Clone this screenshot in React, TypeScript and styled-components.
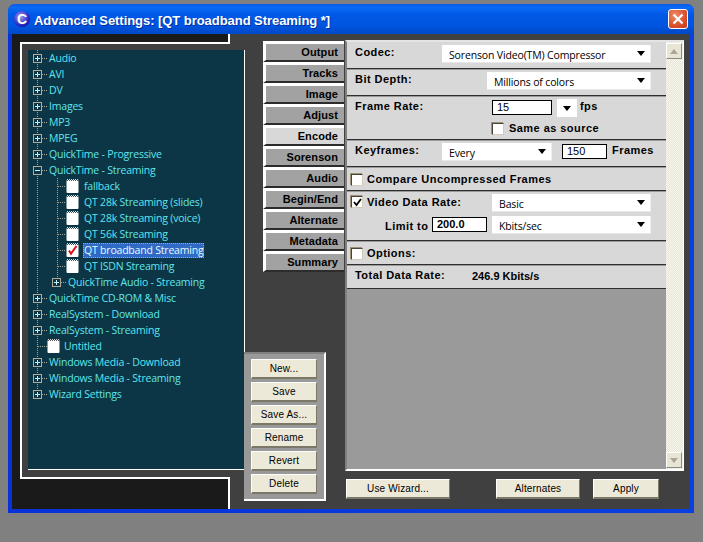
import React from "react";
import styled, { createGlobalStyle } from "styled-components";

const Global = createGlobalStyle`
  html, body { margin: 0; padding: 0; background: #808080; }
  * { box-sizing: border-box; }
  body { font-family: "Liberation Sans", Arial, sans-serif; width: 703px; height: 542px; overflow: hidden; }
`;

const Win = styled.div`
  margin: 4px 0 0 8px;
  width: 686px;
  height: 509px;
  border-radius: 7px 7px 0 0;
  background: linear-gradient(90deg, #0831d9, #0a3fe0);
  overflow: hidden;
  display: flex;
  flex-direction: column;
`;
const TitleBar = styled.div`
  height: 30px;
  flex: none;
  display: flex;
  align-items: center;
  padding: 0 6px;
  gap: 4px;
  background: linear-gradient(180deg, #0a5be8 0%, #0a6bf5 12%, #0058e6 35%, #0055e0 70%, #0048c8 100%);
`;
const AppIcon = styled.div`
  width: 16px;
  height: 16px;
  border-radius: 50%;
  flex: none;
  display: flex;
  align-items: center;
  justify-content: center;
  background: radial-gradient(circle at 40% 35%, #9a9cf0, #2020c0 65%, #08086a);
  color: #fff;
  font: bold 14px/16px "Liberation Sans", sans-serif;
`;
const Title = styled.div`
  flex: 1;
  margin-top: 3px;
  color: #fff;
  font: bold 13px "Liberation Sans", sans-serif;
  letter-spacing: -0.05px;
  text-shadow: 1px 1px 0 #0030a0;
  white-space: nowrap;
`;
const Close = styled.div`
  width: 20px;
  height: 20px;
  border: 1px solid #fff;
  border-radius: 3px;
  background: radial-gradient(circle at 35% 30%, #ee8a6a, #d9502c 60%, #c23a1c);
  display: flex;
  align-items: center;
  justify-content: center;
`;
const Body = styled.div`
  flex: 1;
  margin: 0 4px 4px;
  background: #404040;
  display: flex;
  min-height: 0;
`;
const LeftPane = styled.div`
  position: relative;
  width: 218px;
  flex: none;
  background: #1a1a1a;
  border-right: 2px solid #fff;
  padding: 8px 0 30px 8px;
`;
const Frame = styled.div`
  position: relative;
  width: 225px;
  height: 437px;
  background: #404040;
  border-left: 2px solid #fff;
  padding: 8px 0 8px 6px;
  &::before {
    content: "";
    position: absolute;
    left: 0;
    top: 0;
    width: 208px;
    height: 2px;
    background: #fff;
  }
  &::after {
    content: "";
    position: absolute;
    left: -2px;
    bottom: 0;
    width: 210px;
    height: 2px;
    background: #fff;
  }
`;
const Tree = styled.div`
  width: 217px;
  height: 420px;
  background: #0c3545;
  border-right: 1px solid #fff;
  border-bottom: 1px solid #fff;
`;

const dots = "repeating-linear-gradient(180deg, #a8a48e 0 1px, transparent 1px 2px)";
const TreeRow = styled.div<{ $root?: "full" | "half"; $sub?: "full" | "half" }>`
  height: 16px;
  display: flex;
  align-items: center;
  background-image: ${(p) => [p.$root ? dots : "", p.$sub ? dots : ""].filter(Boolean).join(",") || "none"};
  background-repeat: no-repeat;
  background-position: ${(p) => [p.$root ? "9px 0" : "", p.$sub ? "29px 0" : ""].filter(Boolean).join(",") || "0 0"};
  background-size: ${(p) =>
    [p.$root ? `1px ${p.$root === "half" ? "50%" : "100%"}` : "", p.$sub ? `1px ${p.$sub === "half" ? "50%" : "100%"}` : ""]
      .filter(Boolean)
      .join(",") || "auto"};
`;
const Box = styled.div<{ $at: number }>`
  width: 9px;
  height: 9px;
  flex: none;
  margin-left: ${(p) => p.$at}px;
  border: 1px solid #b4ac98;
  background: #0c3545;
  position: relative;
  &::before {
    content: "";
    position: absolute;
    left: 1px;
    top: 3px;
    width: 5px;
    height: 1px;
    background: #bff4f6;
  }
`;
const Plus = styled.div`
  position: absolute;
  left: 3px;
  top: 1px;
  width: 1px;
  height: 5px;
  background: #bff4f6;
`;
const Dash = styled.div<{ $at?: number; $w: number }>`
  flex: none;
  height: 1px;
  margin-left: ${(p) => p.$at ?? 0}px;
  width: ${(p) => p.$w}px;
  background: repeating-linear-gradient(90deg, #a8a48e 0 1px, transparent 1px 2px);
`;
const TreeText = styled.div<{ $sel?: boolean; $gap: number }>`
  margin-left: ${(p) => p.$gap}px;
  padding: 0 ${(p) => (p.$sel ? 1 : 0)}px;
  height: ${(p) => (p.$sel ? "15px" : "auto")};
  font: 10.5px "Open Sans", sans-serif;
  letter-spacing: -0.2px;
  white-space: nowrap;
  color: ${(p) => (p.$sel ? "#e4fbff" : "#5fe6ee")};
  background: ${(p) => (p.$sel ? "#316ac5" : "transparent")};
  outline: ${(p) => (p.$sel ? "1px dotted #e0a040" : "none")};
  outline-offset: -1px;
  display: flex;
  align-items: center;
`;

const Doc = ({ checked }: { checked?: boolean }) => (
  <svg width="13" height="14" viewBox="0 0 13 14" style={{ flex: "none" }}>
    <rect x="0.5" y="1" width="12" height="13" rx="1" fill="#fff" />
    <path d="M1 0.5h1M3 0.5h1M5 0.5h1M7 0.5h1M9 0.5h1M11 0.5h1" stroke="#d8d8d8" strokeWidth="1" />
    <path d="M1 1.5h11" stroke="#555" strokeWidth="1" strokeDasharray="1 1" />
    {checked && <path d="M3 7.5l2 3.2L10.5 3" stroke="#d8121c" strokeWidth="2" fill="none" />}
  </svg>
);

const Tools = styled.div`
  position: absolute;
  left: 232px;
  top: 318px;
  width: 82px;
  height: 149px;
  background: #999;
  border-top: 2px solid #808080;
  border-right: 2px solid #fff;
  border-bottom: 2px solid #fff;
  padding: 5px 0 0 7px;
  display: flex;
  flex-direction: column;
  gap: 3px;
  z-index: 2;
`;
const Btn = styled.div<{ $w: number }>`
  width: ${(p) => p.$w}px;
  height: 20px;
  flex: none;
  background: #ece9d8;
  border-top: 1px solid #fff;
  border-left: 1px solid #fff;
  border-right: 1px solid #7c7868;
  border-bottom: 2px solid #7c7868;
  display: flex;
  align-items: center;
  justify-content: center;
  color: #000;
  font: 10px "Liberation Sans", sans-serif;
  letter-spacing: 0.15px;
  white-space: nowrap;
`;

const Tabs = styled.div`
  width: 81px;
  margin: 7px 0 0 33px;
  flex: none;
`;
const Tab = styled.div<{ $on?: boolean }>`
  height: 21px;
  background: ${(p) => (p.$on ? "#d8d8d8" : "#a2a2a2")};
  border-top: 3px solid #fff;
  border-left: 3px solid #fff;
  border-bottom: 2px solid #2c2c2c;
  padding-right: 6px;
  text-align: right;
  color: #000;
  font: bold 11px/17px "Liberation Sans", sans-serif;
  letter-spacing: 0.1px;
`;

const Right = styled.div`
  flex: none;
  margin: 6px 0 0 1px;
  width: 339px;
  display: flex;
  flex-direction: column;
`;
const Panel = styled.div`
  height: 431px;
  display: flex;
  background: #9a9a9a;
  border-top: 2px solid #e4e4e4;
  border-left: 2px solid #808080;
  border-right: 1px solid #fff;
  border-bottom: 2px solid #fff;
`;
const Rows = styled.div`
  width: 319px;
  flex: none;
  display: flex;
  flex-direction: column;
  gap: 1px;
`;
const Row = styled.div<{ $h: number; $pt: number; $pl: number }>`
  height: ${(p) => p.$h}px;
  flex: none;
  background: #d8d8d8;
  border-bottom: 1px solid #2e2e2e;
  padding: ${(p) => p.$pt}px 0 0 ${(p) => p.$pl}px;
`;
const Line = styled.div<{ $mt?: number; $center?: boolean }>`
  display: flex;
  align-items: ${(p) => (p.$center ? "center" : "flex-start")};
  margin-top: ${(p) => p.$mt ?? 0}px;
`;
const Label = styled.div<{ $w?: number; $ml?: number; $mt?: number; $mb?: number }>`
  width: ${(p) => (p.$w ? `${p.$w}px` : "auto")};
  margin-left: ${(p) => p.$ml ?? 0}px;
  margin-top: ${(p) => p.$mt ?? 0}px;
  margin-bottom: ${(p) => p.$mb ?? 0}px;
  flex: none;
  color: #000;
  font: bold 11px/14px "Liberation Sans", sans-serif;
  letter-spacing: 0.45px;
  white-space: nowrap;
`;
const Select = styled.div<{ $w: number; $ml?: number }>`
  width: ${(p) => p.$w}px;
  margin-left: ${(p) => p.$ml ?? 0}px;
  height: 18px;
  flex: none;
  background: #fff;
  border-right: 1px solid #eee;
  border-bottom: 1px solid #e8e8e8;
  display: flex;
  align-items: center;
  justify-content: space-between;
  padding: 2px 5px 0 7px;
  color: #000;
  font: 10.5px "Open Sans", sans-serif;
  letter-spacing: -0.15px;
  white-space: nowrap;
`;
const Arrow = styled.div`
  width: 0;
  height: 0;
  flex: none;
  margin-top: -3px;
  border-left: 4px solid transparent;
  border-right: 4px solid transparent;
  border-top: 5px solid #000;
`;
const ArrowBox = styled.div`
  width: 20px;
  height: 18px;
  margin: 0 3px 0 5px;
  flex: none;
  background: #fff;
  display: flex;
  align-items: center;
  justify-content: center;
  padding-top: 4px;
`;
const Field = styled.div<{ $w: number; $bold?: boolean; $mr?: number }>`
  width: ${(p) => p.$w}px;
  height: 15px;
  margin: 1px ${(p) => p.$mr ?? 0}px 0 0;
  flex: none;
  background: #fff;
  border: 1px solid #000;
  padding-left: 4px;
  color: #000;
  font: ${(p) => (p.$bold ? "bold " : "")}11px/13px "Liberation Sans", sans-serif;
`;
const Check = styled.div<{ $ml?: number; $mr?: number; $mt?: number }>`
  width: 12px;
  height: 12px;
  flex: none;
  margin: ${(p) => p.$mt ?? 0}px ${(p) => p.$mr ?? 4}px 0 ${(p) => p.$ml ?? 0}px;
  background: #fff;
  border-top: 1px solid #4a4436;
  border-left: 1px solid #4a4436;
  border-right: 1px solid #d4ccb8;
  border-bottom: 1px solid #d4ccb8;
  box-shadow: -1px -1px 0 #9c9078;
  display: flex;
  align-items: center;
  justify-content: center;
`;
const Value = styled.div`
  color: #000;
  font: bold 11px/16px "Liberation Sans", sans-serif;
`;

const Scroll = styled.div`
  width: 17px;
  flex: none;
  padding: 1px 1px 1px 0;
  display: flex;
  flex-direction: column;
  justify-content: space-between;
  background-color: #f4f3ea;
  background-image: conic-gradient(#e6e4d6 25%, #f8f7f0 0 50%, #e6e4d6 0 75%, #f8f7f0 0);
  background-size: 2px 2px;
`;
const ScrollBtn = styled.div`
  width: 16px;
  height: 16px;
  background: #e8e5d4;
  border-top: 1px solid #fff;
  border-left: 1px solid #fff;
  border-right: 1px solid #8c8a7c;
  border-bottom: 1px solid #8c8a7c;
  display: flex;
  align-items: center;
  justify-content: center;
`;
const Tri = styled.div<{ $up?: boolean }>`
  width: 0;
  height: 0;
  border-left: 4px solid transparent;
  border-right: 4px solid transparent;
  ${(p) => (p.$up ? "border-bottom: 5px solid #a8a698;" : "border-top: 5px solid #a8a698;")}
`;
const Bottom = styled.div`
  display: flex;
  margin: 8px 0 0 1px;
`;
const Spacer = styled.div<{ $w: number }>`
  width: ${(p) => p.$w}px;
  flex: none;
`;

const Toggle = ({ minus, at }: { minus?: boolean; at: number }) => (
  <Box $at={at}>{!minus && <Plus />}</Box>
);

const Mark = () => (
  <svg width="9" height="9" viewBox="0 0 9 9">
    <path d="M1 4l2.5 3L8 1" stroke="#000" strokeWidth="1.8" fill="none" />
  </svg>
);

const rootA = ["Audio", "AVI", "DV", "Images", "MP3", "MPEG", "QuickTime - Progressive"];
const kids = ["fallback", "QT 28k Streaming (slides)", "QT 28k Streaming (voice)", "QT 56k Streaming", "QT broadband Streaming", "QT ISDN Streaming"];
const rootB = ["QuickTime CD-ROM & Misc", "RealSystem - Download", "RealSystem - Streaming"];
const rootC = ["Windows Media - Download", "Windows Media - Streaming"];
const tabNames = ["Output", "Tracks", "Image", "Adjust", "Encode", "Sorenson", "Audio", "Begin/End", "Alternate", "Metadata", "Summary"];
const tools = ["New...", "Save", "Save As...", "Rename", "Revert", "Delete"];

export default function App() {
  return (
    <>
      <Global />
      <Win>
        <TitleBar>
          <AppIcon>C</AppIcon>
          <Title>Advanced Settings: [QT broadband Streaming *]</Title>
          <Close>
            <svg width="12" height="12" viewBox="0 0 12 12">
              <path d="M1.5 1.5l9 9M10.5 1.5l-9 9" stroke="#fff" strokeWidth="2.2" />
            </svg>
          </Close>
        </TitleBar>
        <Body>
          <LeftPane>
            <Frame>
              <Tree>
                {rootA.map((t) => (
                  <TreeRow $root="full" key={t}>
                    <Toggle at={5} />
                    <Dash $w={6} />
                    <TreeText $gap={1}>{t}</TreeText>
                  </TreeRow>
                ))}
                <TreeRow $root="full">
                  <Toggle at={5} minus />
                  <Dash $w={6} />
                  <TreeText $gap={1}>QuickTime - Streaming</TreeText>
                </TreeRow>
                {kids.map((t, i) => (
                  <TreeRow $root="full" $sub="full" key={t}>
                    <Dash $at={30} $w={8} />
                    <Doc checked={i === 4} />
                    <TreeText $gap={i === 4 ? 4 : 5} $sel={i === 4}>
                      {t}
                    </TreeText>
                  </TreeRow>
                ))}
                <TreeRow $root="full" $sub="half">
                  <Toggle at={24} />
                  <Dash $w={6} />
                  <TreeText $gap={1}>QuickTime Audio - Streaming</TreeText>
                </TreeRow>
                {rootB.map((t) => (
                  <TreeRow $root="full" key={t}>
                    <Toggle at={5} />
                    <Dash $w={6} />
                    <TreeText $gap={1}>{t}</TreeText>
                  </TreeRow>
                ))}
                <TreeRow $root="full">
                  <Dash $at={10} $w={9} />
                  <Doc />
                  <TreeText $gap={4}>Untitled</TreeText>
                </TreeRow>
                {rootC.map((t) => (
                  <TreeRow $root="full" key={t}>
                    <Toggle at={5} />
                    <Dash $w={6} />
                    <TreeText $gap={1}>{t}</TreeText>
                  </TreeRow>
                ))}
                <TreeRow $root="half">
                  <Toggle at={5} />
                  <Dash $w={6} />
                  <TreeText $gap={1}>Wizard Settings</TreeText>
                </TreeRow>
              </Tree>
            </Frame>
            <Tools>
              {tools.map((t) => (
                <Btn $w={66} key={t}>
                  {t}
                </Btn>
              ))}
            </Tools>
          </LeftPane>
          <Tabs>
            {tabNames.map((t) => (
              <Tab key={t} $on={t === "Encode"}>
                {t}
              </Tab>
            ))}
          </Tabs>
          <Right>
            <Panel>
              <Rows>
                <Row $h={27} $pt={3} $pl={8}>
                  <Line>
                    <Label $w={87}>Codec:</Label>
                    <Select $w={209}>
                      Sorenson Video(TM) Compressor
                      <Arrow />
                    </Select>
                  </Line>
                </Row>
                <Row $h={26} $pt={2} $pl={8}>
                  <Line>
                    <Label $w={132}>Bit Depth:</Label>
                    <Select $w={164}>
                      Millions of colors
                      <Arrow />
                    </Select>
                  </Line>
                </Row>
                <Row $h={43} $pt={2} $pl={8}>
                  <Line>
                    <Label $w={137}>Frame Rate:</Label>
                    <Field $w={60}>15</Field>
                    <ArrowBox>
                      <Arrow />
                    </ArrowBox>
                    <Label>fps</Label>
                  </Line>
                  <Line $mt={4} $center>
                    <Check $ml={137} $mr={5} />
                    <Label $mb={2}>Same as source</Label>
                  </Line>
                </Row>
                <Row $h={26} $pt={2} $pl={8}>
                  <Line>
                    <Label $w={87}>Keyframes:</Label>
                    <Select $w={110}>
                      Every
                      <Arrow />
                    </Select>
                    <Spacer $w={10} />
                    <Field $w={45} $mr={5}>
                      150
                    </Field>
                    <Label>Frames</Label>
                  </Line>
                </Row>
                <Row $h={23} $pt={4} $pl={4}>
                  <Line $center>
                    <Check />
                    <Label $mb={2}>Compare Uncompressed Frames</Label>
                  </Line>
                </Row>
                <Row $h={49} $pt={2} $pl={4}>
                  <Line>
                    <Check $mt={2}>
                      <Mark />
                    </Check>
                    <Label $w={125} $mt={1}>
                      Video Data Rate:
                    </Label>
                    <Select $w={159}>
                      Basic
                      <Arrow />
                    </Select>
                  </Line>
                  <Line $mt={4}>
                    <Label $w={47} $ml={34} $mt={3}>
                      Limit to
                    </Label>
                    <Field $w={55} $bold $mr={5}>
                      200.0
                    </Field>
                    <Select $w={159}>
                      Kbits/sec
                      <Arrow />
                    </Select>
                  </Line>
                </Row>
                <Row $h={23} $pt={4} $pl={4}>
                  <Line $center>
                    <Check />
                    <Label $mb={2}>Options:</Label>
                  </Line>
                </Row>
                <Row $h={23} $pt={2} $pl={8}>
                  <Line>
                    <Label $w={117}>Total Data Rate:</Label>
                    <Value>246.9 Kbits/s</Value>
                  </Line>
                </Row>
              </Rows>
              <Scroll>
                <ScrollBtn>
                  <Tri $up />
                </ScrollBtn>
                <ScrollBtn>
                  <Tri />
                </ScrollBtn>
              </Scroll>
            </Panel>
            <Bottom>
              <Btn $w={104}>Use Wizard...</Btn>
              <Spacer $w={46} />
              <Btn $w={84}>Alternates</Btn>
              <Spacer $w={13} />
              <Btn $w={66}>Apply</Btn>
            </Bottom>
          </Right>
        </Body>
      </Win>
    </>
  );
}
